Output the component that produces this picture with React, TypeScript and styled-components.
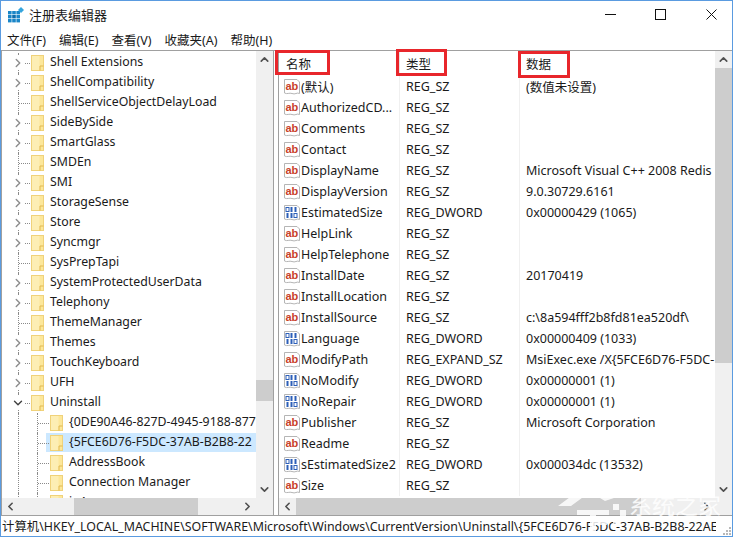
import React from "react";
import styled, { createGlobalStyle } from "styled-components";
import { ChevronRight, ChevronDown, ChevronUp, ChevronLeft } from "lucide-react";

const GlobalStyle = createGlobalStyle`
  html, body {
    margin: 0;
    padding: 0;
    background: #fff;
  }
  body {
    font-family: "Noto Sans", "Noto Sans CJK SC", sans-serif;
    font-size: 12.5px;
    color: #1a1a1a;
  }
`;

const Window = styled.div`
  position: relative;
  width: 733px;
  height: 537px;
  box-sizing: border-box;
  border: 1px solid #5a9be0;
  display: flex;
  flex-direction: column;
  overflow: hidden;
  background: #fff;
`;

const TitleBar = styled.div`
  height: 29px;
  display: flex;
  align-items: center;
  padding-left: 7px;
  margin-right: -2px;
  gap: 5px;
  font-size: 13px;
  flex: none;
`;

const TitleIconWrap = styled.span`
  display: flex;
  margin-bottom: 2px;
`;

const TitleText = styled.span`
  flex: 1;
  margin-bottom: 3px;
`;

const WindowButton = styled.div`
  width: 45.5px;
  height: 29px;
  display: flex;
  align-items: center;
  justify-content: center;
  padding-bottom: 2px;
  box-sizing: border-box;
`;

const MenuBar = styled.div`
  height: 20px;
  flex: none;
  display: flex;
  align-items: center;
  padding-left: 6px;
  gap: 13px;
  font-size: 12.5px;
  border-bottom: 1px solid #a0a0a0;
`;

const MenuItem = styled.span`
  white-space: nowrap;
  margin-bottom: 2px;
`;

const Panes = styled.div`
  flex: 1;
  min-height: 0;
  display: flex;
  gap: 4px;
  border-bottom: 1px solid #a0a0a0;
`;

const Pane = styled.div<{ $width: number }>`
  width: ${(p) => p.$width}px;
  flex: none;
  box-sizing: border-box;
  display: grid;
  grid-template-columns: minmax(0, 1fr) 17px;
  grid-template-rows: minmax(0, 1fr) 17px;
  border-left: 1px solid #a0a0a0;
  border-right: 1px solid #a0a0a0;
`;

const TreeBody = styled.div`
  padding-top: 2px;
  overflow: hidden;
  min-width: 0;
  font-size: 12.3px;
`;

const TreeRow = styled.div<{ $depth: number }>`
  position: relative;
  height: 20px;
  display: flex;
  align-items: center;
  padding-left: ${(p) => 29 + p.$depth * 19}px;
  white-space: nowrap;
`;

const RowHighlight = styled.div`
  position: absolute;
  left: 44px;
  right: 0;
  top: 0;
  bottom: 1px;
  background: #cce8ff;
`;

const DotV = styled.div<{ $left: number }>`
  position: absolute;
  left: ${(p) => p.$left}px;
  top: 0;
  height: 100%;
  border-left: 1px dotted #8a8a8a;
`;

const DotH = styled.div<{ $left: number; $width: number }>`
  position: absolute;
  left: ${(p) => p.$left}px;
  top: 10px;
  width: ${(p) => p.$width}px;
  border-top: 1px dotted #8a8a8a;
`;

const Expander = styled.span`
  position: absolute;
  left: 9px;
  top: 3px;
  width: 14px;
  height: 14px;
  background: #fff;
  color: #8c8c8c;
  display: flex;
  align-items: center;
  justify-content: center;
`;

const RowLabel = styled.span`
  position: relative;
  margin-left: 6px;
  margin-bottom: 3px;
`;

const FolderWrap = styled.span`
  position: relative;
  display: flex;
  flex: none;
`;

const ScrollTrack = styled.div<{ $horizontal?: boolean }>`
  background: #f0f0f0;
  display: flex;
  flex-direction: ${(p) => (p.$horizontal ? "row" : "column")};
  min-width: 0;
  min-height: 0;
`;

const ScrollArrow = styled.div`
  flex: none;
  width: 17px;
  height: 17px;
  display: flex;
  align-items: center;
  justify-content: center;
  color: #505050;
`;

const ScrollGap = styled.div<{ $size?: number }>`
  flex: ${(p) => (p.$size !== undefined ? `0 0 ${p.$size}px` : "1")};
`;

const ScrollThumb = styled.div<{ $size: number }>`
  flex: 0 0 ${(p) => p.$size}px;
  background: #cdcdcd;
`;

const Corner = styled.div`
  background: #f0f0f0;
`;

const ListBody = styled.div`
  overflow: hidden;
  min-width: 0;
`;

const ListRow = styled.div<{ $header?: boolean }>`
  display: grid;
  grid-template-columns: 121px 120px minmax(0, 1fr);
  height: ${(p) => (p.$header ? 25 : 21)}px;
  white-space: nowrap;
`;

const Cell = styled.div<{ $header?: boolean }>`
  display: flex;
  align-items: center;
  overflow: hidden;
  padding-left: 6px;
  border-right: 1px solid ${(p) => (p.$header ? "#e5e5e5" : "#f0f0f0")};
  &:last-child {
    border-right: none;
  }
`;

const NameHeader = styled(Cell)`
  padding-left: 7px;
`;

const NameCell = styled(Cell)`
  padding-left: 5px;
  gap: 1px;
`;

const StatusBar = styled.div`
  height: 20px;
  flex: none;
  display: flex;
  align-items: center;
  gap: 6px;
  padding-left: 1px;
  font-size: 12.4px;
`;

const StatusText = styled.span`
  flex: 1;
  min-width: 0;
  overflow: hidden;
  white-space: nowrap;
`;

const Grip = styled.span`
  flex: none;
  display: flex;
  align-self: flex-end;
`;

const Annotation = styled.div<{ $x: number; $y: number; $w: number; $h: number }>`
  position: absolute;
  left: ${(p) => p.$x}px;
  top: ${(p) => p.$y}px;
  width: ${(p) => p.$w}px;
  height: ${(p) => p.$h}px;
  box-sizing: border-box;
  border: 3px solid #e8262b;
`;

const Watermark = styled.div`
  position: absolute;
  left: 556px;
  top: 481px;
  display: flex;
  align-items: flex-start;
  color: #fff;
  font-size: 23px;
  line-height: 1;
  opacity: 0.85;
  font-family: "Noto Sans CJK SC", sans-serif;
`;

const WatermarkText = styled.span`
  margin-top: 11px;
  margin-left: -2px;
`;

const Folder = () => (
  <svg width="13" height="16" viewBox="0 0 13 16">
    <rect x="0.5" y="0.5" width="12" height="15" fill="#fce79a" stroke="#f0d27a" />
    <rect x="1" y="1" width="7.5" height="14" fill="#fdeeb4" />
    <path d="M9 15.5V11H12.5" fill="none" stroke="#e2b94f" />
  </svg>
);

const AppIcon = () => (
  <svg width="16" height="16" viewBox="0 0 16 16">
    <g fill="#1a86c8">
      <rect x="0" y="4" width="3.6" height="3.4" />
      <rect x="4.2" y="4" width="3.6" height="3.4" />
      <rect x="8.4" y="4" width="3.6" height="3.4" />
      <rect x="0" y="8" width="3.6" height="3.4" />
      <rect x="4.2" y="8" width="3.6" height="3.4" fill="#0f6cab" />
      <rect x="8.4" y="8" width="3.6" height="3.4" />
      <rect x="0" y="12" width="3.6" height="3.4" />
      <rect x="4.2" y="12" width="3.6" height="3.4" />
      <rect x="8.4" y="12" width="3.6" height="3.4" />
    </g>
    <path d="M13 0l3 3-3 3-3-3z" fill="#35a5dd" />
  </svg>
);

const PageShape = () => (
  <path
    d="M0.5 1.5H13L15.5 4V15.5C13 14 11 17 8 15.5C5.5 14.5 3 16.5 0.5 15Z"
    fill="#fff"
    stroke="#b5b5b5"
  />
);

const StringIcon = () => (
  <svg width="16" height="18" viewBox="0 0 16 18" style={{ flex: "none" }}>
    <PageShape />
    <text x="1.4" y="11.5" fontFamily="Liberation Sans" fontWeight="700" fontSize="11" fill="#c8402a">
      ab
    </text>
  </svg>
);

const Bits = ({ y, bits }: { y: number; bits: string }) => (
  <>
    {bits.split("").map((b, i) =>
      b === "1" ? (
        <rect key={i} x={2.5 + i * 4} y={y} width="2" height="5" fill="#2c5fb8" />
      ) : (
        <rect key={i} x={2 + i * 4} y={y + 0.5} width="3" height="4" fill="none" stroke="#2c5fb8" />
      )
    )}
  </>
);

const BinaryIcon = () => (
  <svg width="16" height="18" viewBox="0 0 16 18" style={{ flex: "none" }}>
    <PageShape />
    <Bits y={3} bits="011" />
    <Bits y={9} bits="110" />
  </svg>
);

type TreeItem = { name: string; expand?: "closed" | "open"; depth?: number; selected?: boolean };

const treeItems: TreeItem[] = [
  { name: "Shell Extensions", expand: "closed" },
  { name: "ShellCompatibility", expand: "closed" },
  { name: "ShellServiceObjectDelayLoad" },
  { name: "SideBySide", expand: "closed" },
  { name: "SmartGlass", expand: "closed" },
  { name: "SMDEn" },
  { name: "SMI", expand: "closed" },
  { name: "StorageSense", expand: "closed" },
  { name: "Store", expand: "closed" },
  { name: "Syncmgr", expand: "closed" },
  { name: "SysPrepTapi" },
  { name: "SystemProtectedUserData", expand: "closed" },
  { name: "Telephony", expand: "closed" },
  { name: "ThemeManager" },
  { name: "Themes", expand: "closed" },
  { name: "TouchKeyboard", expand: "closed" },
  { name: "UFH", expand: "closed" },
  { name: "Uninstall", expand: "open" },
  { name: "{0DE90A46-827D-4945-9188-877", depth: 1 },
  { name: "{5FCE6D76-F5DC-37AB-B2B8-22", depth: 1, selected: true },
  { name: "AddressBook", depth: 1 },
  { name: "Connection Manager", depth: 1 },
  { name: "ie4", depth: 1 },
];

type ListItem = { name: string; type: string; data?: string };

const listItems: ListItem[] = [
  { name: "(默认)", type: "REG_SZ", data: "(数值未设置)" },
  { name: "AuthorizedCD...", type: "REG_SZ" },
  { name: "Comments", type: "REG_SZ" },
  { name: "Contact", type: "REG_SZ" },
  { name: "DisplayName", type: "REG_SZ", data: "Microsoft Visual C++ 2008 Redis" },
  { name: "DisplayVersion", type: "REG_SZ", data: "9.0.30729.6161" },
  { name: "EstimatedSize", type: "REG_DWORD", data: "0x00000429 (1065)" },
  { name: "HelpLink", type: "REG_SZ" },
  { name: "HelpTelephone", type: "REG_SZ" },
  { name: "InstallDate", type: "REG_SZ", data: "20170419" },
  { name: "InstallLocation", type: "REG_SZ" },
  { name: "InstallSource", type: "REG_SZ", data: "c:\\8a594fff2b8fd81ea520df\\" },
  { name: "Language", type: "REG_DWORD", data: "0x00000409 (1033)" },
  { name: "ModifyPath", type: "REG_EXPAND_SZ", data: "MsiExec.exe /X{5FCE6D76-F5DC-" },
  { name: "NoModify", type: "REG_DWORD", data: "0x00000001 (1)" },
  { name: "NoRepair", type: "REG_DWORD", data: "0x00000001 (1)" },
  { name: "Publisher", type: "REG_SZ", data: "Microsoft Corporation" },
  { name: "Readme", type: "REG_SZ" },
  { name: "sEstimatedSize2", type: "REG_DWORD", data: "0x000034dc (13532)" },
  { name: "Size", type: "REG_SZ" },
];

const Tree = () => (
  <TreeBody>
    {treeItems.map((item) => (
      <TreeRow key={item.name} $depth={item.depth ?? 0}>
        {item.selected && <RowHighlight />}
        <DotV $left={16} />
        {item.depth ? (
          <>
            <DotV $left={35} />
            <DotH $left={36} $width={11} />
          </>
        ) : (
          <DotH $left={17} $width={11} />
        )}
        {item.expand && (
          <Expander>
            {item.expand === "open" ? (
              <ChevronDown size={14} strokeWidth={2.4} color="#404040" />
            ) : (
              <ChevronRight size={14} strokeWidth={2.4} />
            )}
          </Expander>
        )}
        <FolderWrap>
          <Folder />
        </FolderWrap>
        <RowLabel>{item.name}</RowLabel>
      </TreeRow>
    ))}
  </TreeBody>
);

const VScroll = ({ before, thumb }: { before: number; thumb: number }) => (
  <ScrollTrack>
    <ScrollArrow>
      <ChevronUp size={13} strokeWidth={3} />
    </ScrollArrow>
    <ScrollGap $size={before} />
    <ScrollThumb $size={thumb} />
    <ScrollGap />
    <ScrollArrow>
      <ChevronDown size={13} strokeWidth={3} />
    </ScrollArrow>
  </ScrollTrack>
);

const HScroll = ({ before, thumb }: { before: number; thumb: number }) => (
  <ScrollTrack $horizontal>
    <ScrollArrow>
      <ChevronLeft size={13} strokeWidth={3} />
    </ScrollArrow>
    <ScrollGap $size={before} />
    <ScrollThumb $size={thumb} />
    <ScrollGap />
    <ScrollArrow>
      <ChevronRight size={13} strokeWidth={3} />
    </ScrollArrow>
  </ScrollTrack>
);

export default function App() {
  return (
    <Window>
      <GlobalStyle />
      <TitleBar>
        <TitleIconWrap>
          <AppIcon />
        </TitleIconWrap>
        <TitleText>注册表编辑器</TitleText>
        <WindowButton>
          <svg width="11" height="11" viewBox="0 0 11 11">
            <path d="M0 5.5H11" stroke="#111" />
          </svg>
        </WindowButton>
        <WindowButton>
          <svg width="11" height="11" viewBox="0 0 11 11">
            <rect x="0.5" y="0.5" width="10" height="10" fill="none" stroke="#111" />
          </svg>
        </WindowButton>
        <WindowButton>
          <svg width="11" height="11" viewBox="0 0 11 11">
            <path d="M0.5 0.5L10.5 10.5M10.5 0.5L0.5 10.5" stroke="#111" />
          </svg>
        </WindowButton>
      </TitleBar>
      <MenuBar>
        <MenuItem>文件(F)</MenuItem>
        <MenuItem>编辑(E)</MenuItem>
        <MenuItem>查看(V)</MenuItem>
        <MenuItem>收藏夹(A)</MenuItem>
        <MenuItem>帮助(H)</MenuItem>
      </MenuBar>
      <Panes>
        <Pane $width={273}>
          <Tree />
          <VScroll before={312} thumb={21} />
          <HScroll before={55} thumb={124} />
          <Corner />
        </Pane>
        <Pane $width={455}>
          <ListBody>
            <ListRow $header>
              <NameHeader $header>名称</NameHeader>
              <Cell $header>类型</Cell>
              <Cell $header>数据</Cell>
            </ListRow>
            {listItems.map((item) => (
              <ListRow key={item.name}>
                <NameCell>
                  {item.type === "REG_DWORD" ? <BinaryIcon /> : <StringIcon />}
                  {item.name}
                </NameCell>
                <Cell>{item.type}</Cell>
                <Cell>{item.data}</Cell>
              </ListRow>
            ))}
          </ListBody>
          <VScroll before={0} thumb={295} />
          <HScroll before={0} thumb={345} />
          <Corner />
        </Pane>
      </Panes>
      <StatusBar>
        <StatusText>
          计算机\HKEY_LOCAL_MACHINE\SOFTWARE\Microsoft\Windows\CurrentVersion\Uninstall\{"{"}5FCE6D76-F5DC-37AB-B2B8-22AE
        </StatusText>
        <Grip>
          <svg width="10" height="10" viewBox="0 0 10 10">
            <path d="M7 1h2v2H7zM4 4h2v2H4zM7 4h2v2H7zM1 7h2v2H1zM4 7h2v2H4zM7 7h2v2H7z" fill="#b8b8b8" />
          </svg>
        </Grip>
      </StatusBar>
      <Annotation $x={274} $y={49} $w={55} $h={25} />
      <Annotation $x={395} $y={48} $w={51} $h={27} />
      <Annotation $x={517} $y={50} $w={52} $h={27} />
      <Watermark>
        <svg width="74" height="50" viewBox="0 0 74 50">
          <path d="M1 24L32 1L60 15L48 19L33 10L14 24Z" fill="#fff" />
          <path d="M20 28H52V33H39V49H33V33H20ZM39 38H50V43H39Z" fill="#fff" />
          <path d="M56 22h6v6h-6zM63 28h6v6h-6zM56 35h6v6h-6z" fill="#fff" />
        </svg>
        <WatermarkText>系统之家</WatermarkText>
      </Watermark>
    </Window>
  );
}
